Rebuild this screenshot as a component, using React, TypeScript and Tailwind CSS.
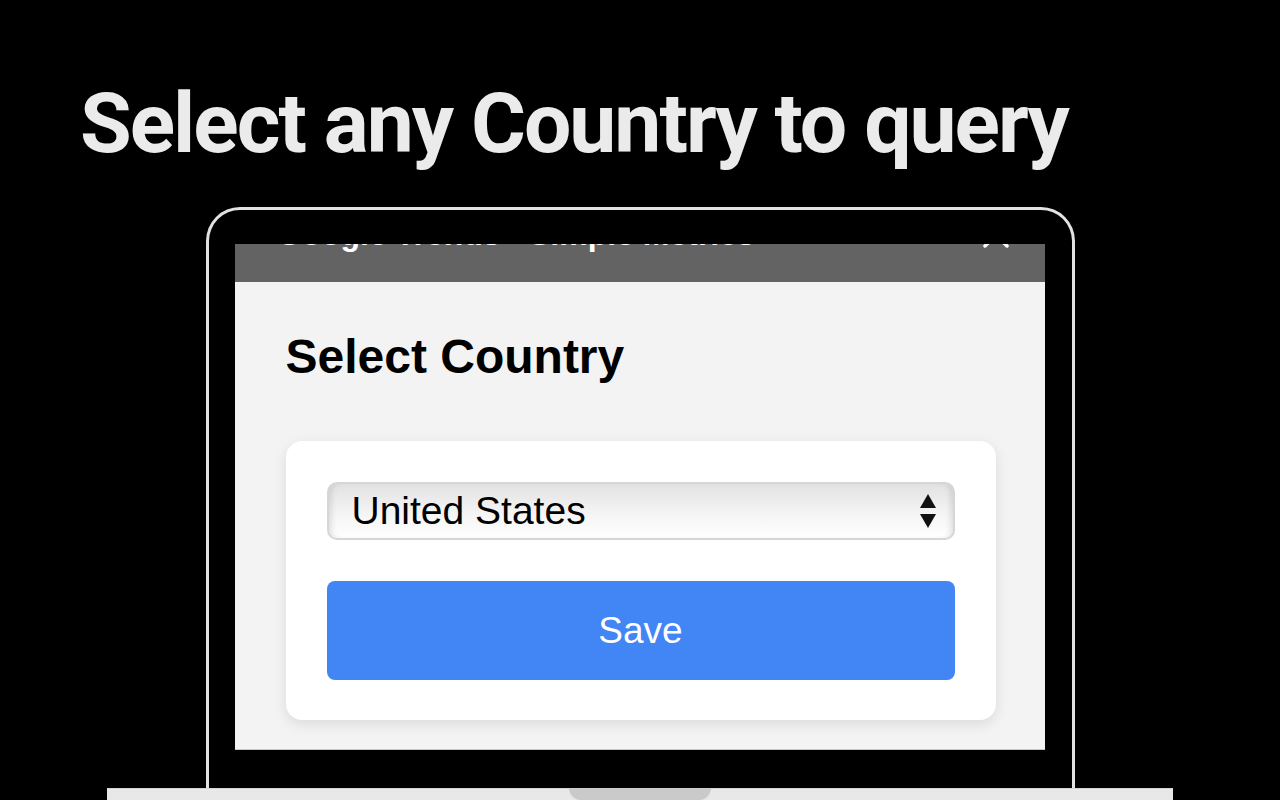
import React from "react";

export default function App() {
  return (
    <div className="w-[1280px] h-[800px] bg-black overflow-hidden flex flex-col">
      <h1
        className="h-[207px] shrink-0 pt-[82px] pl-[80px] text-[84px] leading-[84px] font-bold tracking-[-2px] text-[#ebebeb] whitespace-nowrap"
        style={{ fontFamily: "Roboto, 'Liberation Sans', sans-serif" }}
      >
        Select any Country to query
      </h1>
      <div className="flex flex-col items-center">
        <div className="w-[869px] h-[581px] shrink-0 border-[3px] border-b-0 border-[#e2e2e2] rounded-t-[34px] pt-[34px] pl-[26px]">
          <div
            className="w-[810px] h-[506px] flex flex-col border-b border-[#c6c6c6] bg-[#f3f3f3]"
            style={{ fontFamily: "'Liberation Sans', Arial, Helvetica, sans-serif" }}
          >
            <div className="h-[38px] shrink-0 bg-[#636363] overflow-hidden flex justify-between items-start pl-[42px] pr-[36px]">
              <span className="-mt-[26px] text-[32px] leading-[32px] font-bold text-white whitespace-nowrap">
                Google Trends - Simple Metrics
              </span>
              <svg width="26" height="26" viewBox="0 0 26 26" className="-mt-[22px] shrink-0">
                <path d="M2 2 L24 24 M24 2 L2 24" stroke="white" strokeWidth="3.5" strokeLinecap="round" fill="none" />
              </svg>
            </div>
            <div className="flex-1 flex flex-col pl-[51px] pr-[49px]">
              <h2 className="mt-[47px] h-[56px] text-[48px] leading-[56px] font-bold text-black whitespace-nowrap">
                Select Country
              </h2>
              <div className="mt-[56px] h-[279px] bg-white rounded-[16px] shadow-[0_4px_14px_rgba(0,0,0,0.10)] pt-[41px] px-[41px] flex flex-col gap-[41px]">
                <div className="h-[58px] rounded-[10px] border-2 border-[#d6d6d6] bg-gradient-to-b from-[#e2e2e2] via-[#f3f3f3] to-[#ffffff] shadow-[inset_6px_0_6px_-4px_rgba(0,0,0,0.12),inset_-6px_0_6px_-4px_rgba(0,0,0,0.12)] flex items-center justify-between pl-[23px] pr-[17px]">
                  <span className="text-[39px] leading-[42px] text-black">United States</span>
                  <svg width="16" height="34" viewBox="0 0 16 34">
                    <path d="M8 0 L16 14 L0 14 Z" fill="#111" />
                    <path d="M0 20 L16 20 L8 34 Z" fill="#111" />
                  </svg>
                </div>
                <button className="h-[99px] w-full rounded-[8px] bg-[#4285f4] text-white text-[37px] leading-[40px] flex items-center justify-center">
                  Save
                </button>
              </div>
            </div>
          </div>
        </div>
        <div className="w-[1066px] h-[12px] shrink-0 bg-[#e8e8e8] border-t border-[#d4d4d4] flex justify-center">
          <div className="w-[142px] h-[12px] -mt-px bg-[#cacaca] rounded-b-[12px]" />
        </div>
      </div>
    </div>
  );
}
